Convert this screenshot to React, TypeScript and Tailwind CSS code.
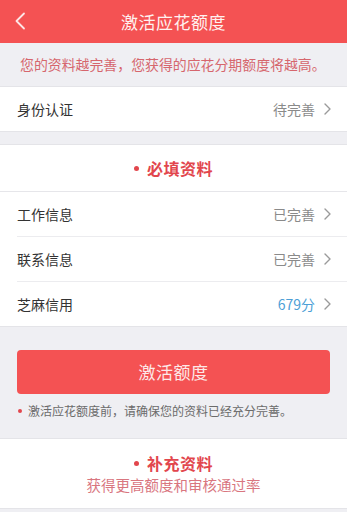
export default function App() {
  const font = { fontFamily: '"Noto Sans CJK SC", "Noto Sans", sans-serif' }
  return (
    <div className="w-[347px] h-[512px] overflow-hidden bg-[#efeff3]" style={font}>
      {/* Header */}
      <div className="relative h-[43px] bg-[#f45253] flex items-center justify-center">
        <svg className="absolute left-[14px] top-[12px]" width="12" height="18" viewBox="0 0 12 18">
          <path d="M10 1.5 L2.5 9 L10 16.5" fill="none" stroke="#fde6e6" strokeWidth="1.8" strokeLinecap="round" strokeLinejoin="round" />
        </svg>
        <span className="text-[17px] text-[#fff1f0] tracking-[0.5px]">激活应花额度</span>
      </div>

      {/* Tip */}
      <div className="h-[43px] flex items-center pl-[20px] text-[13.9px] text-[#d6666d] whitespace-nowrap">
        您的资料越完善，您获得的应花分期额度将越高。
      </div>

      {/* Identity row */}
      <div className="bg-white border-y border-[#e4e4e8]">
        <Row label="身份认证" value="待完善" />
      </div>

      <div className="h-[12px]" />

      {/* Required info */}
      <div className="bg-white border-y border-[#e4e4e8]">
        <div className="h-[47px] flex items-center justify-center border-b border-[#e6e6ea] text-[#e2464d]">
          <span className="w-[5px] h-[5px] rounded-full bg-[#e2464d] mr-[8px]" />
          <span className="text-[16px] font-bold tracking-[0.5px]">必填资料</span>
        </div>
        <div className="pl-[17px]">
          <div className="border-b border-[#ececef]">
            <Row label="工作信息" value="已完善" inset />
          </div>
          <div className="border-b border-[#ececef]">
            <Row label="联系信息" value="已完善" inset />
          </div>
          <Row label="芝麻信用" value="679分" valueClass="text-[#4d9fd6]" inset />
        </div>
      </div>

      {/* Button */}
      <div className="px-[17px] pt-[23px]">
        <div className="h-[44px] rounded-[4px] bg-[#f45253] flex items-center justify-center text-[17px] text-[#fde9e8] tracking-[0.5px]">
          激活额度
        </div>
        <div className="flex items-center mt-[8px] text-[12px] text-[#6b6b6b] whitespace-nowrap">
          <span className="w-[4px] h-[4px] rounded-full bg-[#e2464d] mr-[6px] ml-[1px]" />
          激活应花额度前，请确保您的资料已经充分完善。
        </div>
      </div>

      {/* Supplementary */}
      <div className="mt-[18px] bg-white border-y border-[#e4e4e8] h-[71px] flex flex-col items-center justify-center">
        <div className="flex items-center text-[#e2464d] leading-[22px]">
          <span className="w-[5px] h-[5px] rounded-full bg-[#e2464d] mr-[8px]" />
          <span className="text-[16px] font-bold tracking-[0.5px]">补充资料</span>
        </div>
        <div className="text-[14.5px] leading-[21px] text-[#d9767f]">获得更高额度和审核通过率</div>
      </div>
    </div>
  )
}

function Row({
  label,
  value,
  valueClass = "text-[#8a8a8a]",
  inset = false,
}: {
  label: string
  value: string
  valueClass?: string
  inset?: boolean
}) {
  return (
    <div className={`h-[44px] flex items-center justify-between pr-[16px] ${inset ? "" : "pl-[17px]"}`}>
      <span className="text-[14px] text-[#333]">{label}</span>
      <span className="flex items-center">
        <span className={`text-[14px] ${valueClass}`}>{value}</span>
        <svg className="ml-[9px]" width="7" height="12" viewBox="0 0 7 12">
          <path d="M1 1 L6 6 L1 11" fill="none" stroke="#9a9a9a" strokeWidth="1.4" strokeLinecap="round" strokeLinejoin="round" />
        </svg>
      </span>
    </div>
  )
}
